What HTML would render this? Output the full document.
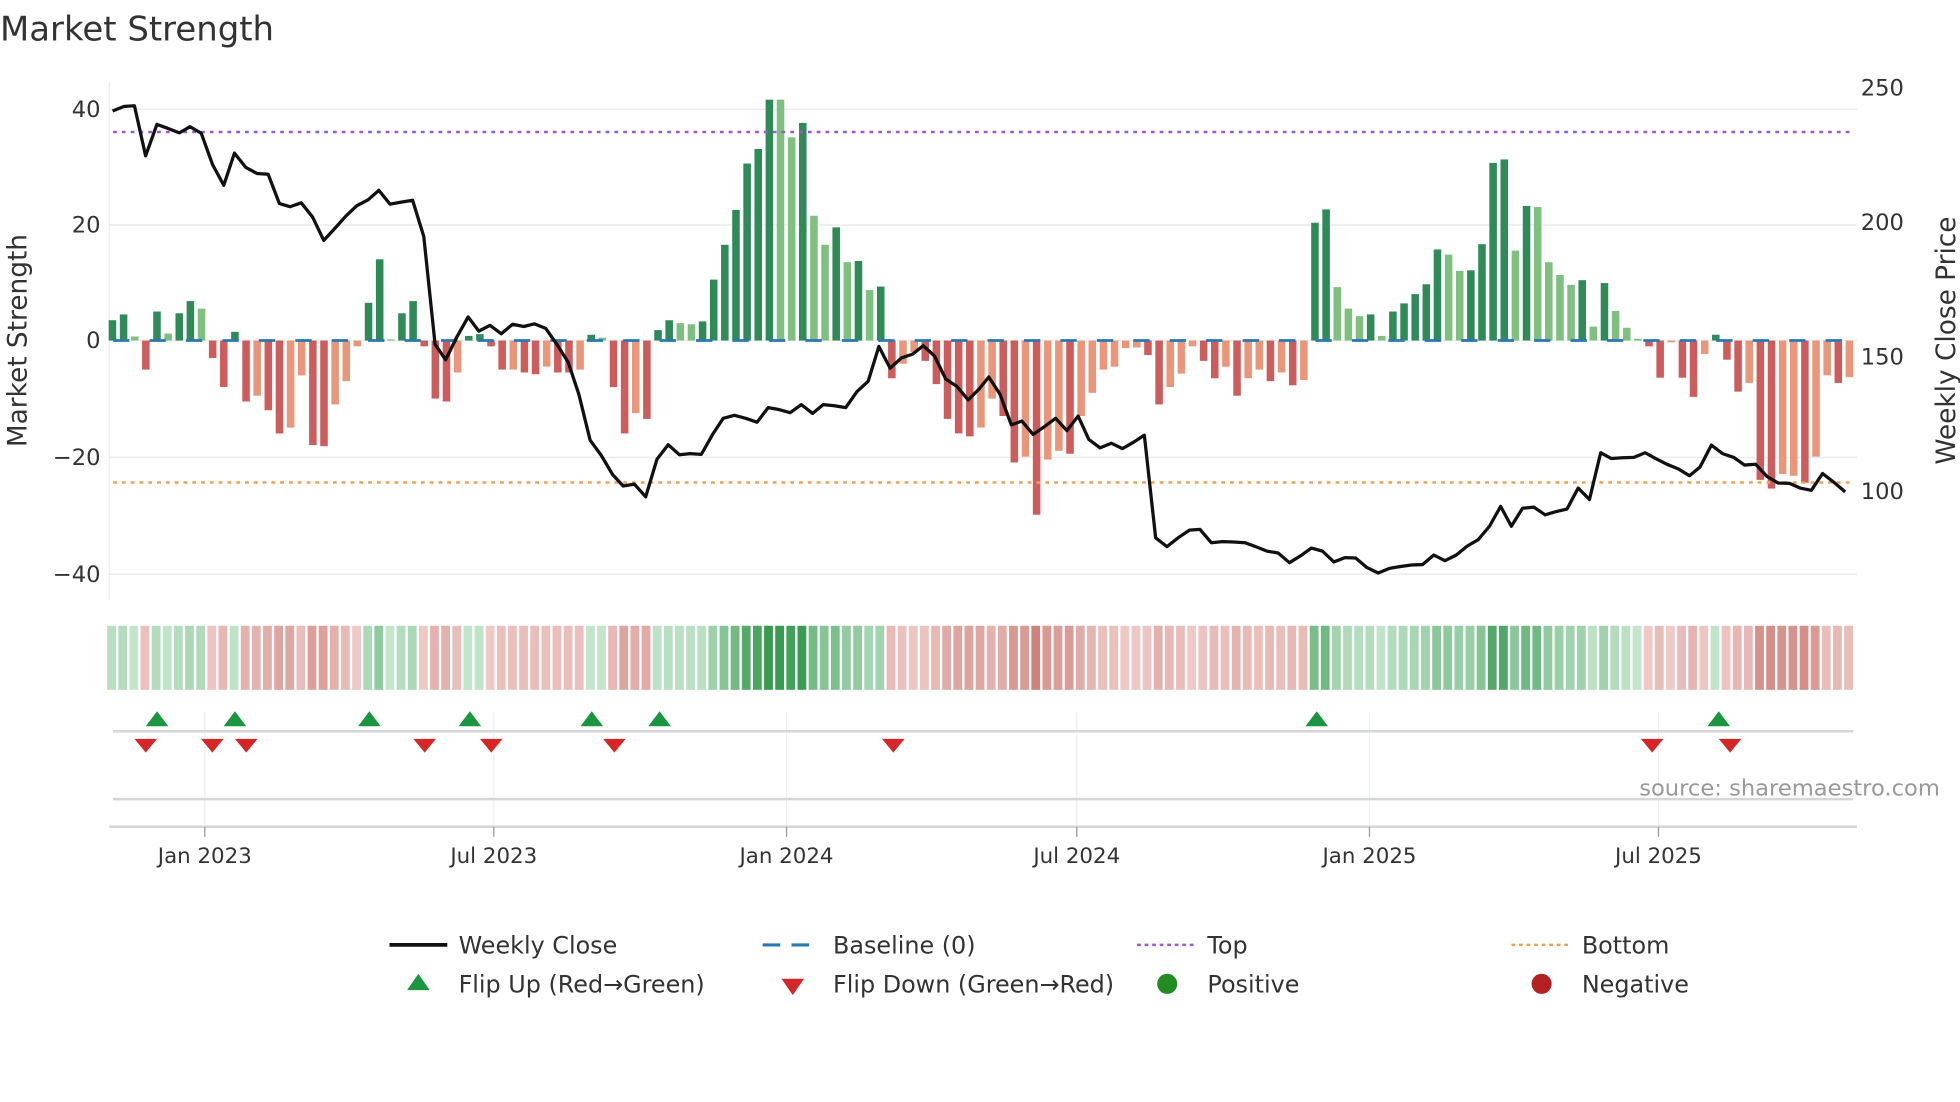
<!DOCTYPE html>
<html><head><meta charset="utf-8"><style>
html,body{margin:0;padding:0;background:#fff;width:1960px;height:1102px;overflow:hidden}
svg{display:block;font-family:"DejaVu Sans","Liberation Sans",sans-serif}
</style></head><body>
<svg id="s" width="1960" height="1102" viewBox="0 0 1560 877" xmlns="http://www.w3.org/2000/svg">
<rect width="1560" height="877" fill="#fff"/>
<text x="0" y="32" font-size="27" fill="#333">Market Strength</text>
<g stroke="#ececec" stroke-width="1.2">
<line x1="87" x2="1478" y1="87" y2="87"/><line x1="87" x2="1478" y1="179" y2="179"/>
<line x1="87" x2="1478" y1="271" y2="271"/><line x1="87" x2="1478" y1="364" y2="364"/>
<line x1="87" x2="1478" y1="457" y2="457"/>
</g>
<line x1="87" x2="87" y1="65" y2="477" stroke="#eee" stroke-width="1"/>
<g font-size="18" fill="#333" text-anchor="end">
<text x="80" y="93">40</text><text x="80" y="185">20</text><text x="80" y="277">0</text>
<text x="80" y="370">−20</text><text x="80" y="463">−40</text>
</g>
<g font-size="18" fill="#333">
<text x="1481" y="76">250</text><text x="1481" y="183">200</text>
<text x="1481" y="290">150</text><text x="1481" y="397">100</text>
</g>
<text transform="translate(21,271) rotate(-90)" font-size="21" fill="#333" text-anchor="middle">Market Strength</text>
<text transform="translate(1556,271) rotate(-90)" font-size="21" fill="#333" text-anchor="middle">Weekly Close Price</text>
<g id="bars"></g>
<line x1="90" x2="1475" y1="271" y2="271" stroke="#2a78b0" stroke-width="2.2" stroke-dasharray="13,16"/>
<line x1="90" x2="1475" y1="105" y2="105" stroke="#9b59d6" stroke-width="2" stroke-dasharray="3,4"/>
<line x1="90" x2="1475" y1="384" y2="384" stroke="#f0a055" stroke-width="2" stroke-dasharray="3,4"/>
<polyline id="price" fill="none" stroke="#111" stroke-width="2.6" stroke-linejoin="round"/>
<g id="strip"></g>
<g stroke="#eef0f2" stroke-width="1">
<line x1="163" x2="163" y1="567" y2="658"/><line x1="393" x2="393" y1="567" y2="658"/>
<line x1="626" x2="626" y1="567" y2="658"/><line x1="857" x2="857" y1="567" y2="658"/>
<line x1="1090" x2="1090" y1="567" y2="658"/><line x1="1320" x2="1320" y1="567" y2="658"/>
</g>
<line x1="90" x2="1475" y1="582" y2="582" stroke="#d4d6d8" stroke-width="2"/>
<line x1="90" x2="1475" y1="636" y2="636" stroke="#d4d6d8" stroke-width="2"/>
<line x1="87" x2="1478" y1="658" y2="658" stroke="#d4d6d8" stroke-width="2"/>
<g id="marks"></g>
<text x="1544" y="633" font-size="18" fill="#999" text-anchor="end">source: sharemaestro.com</text>
<g stroke="#999" stroke-width="1">
<line x1="163" x2="163" y1="658" y2="666"/><line x1="393" x2="393" y1="658" y2="666"/>
<line x1="626" x2="626" y1="658" y2="666"/><line x1="857" x2="857" y1="658" y2="666"/>
<line x1="1090" x2="1090" y1="658" y2="666"/><line x1="1320" x2="1320" y1="658" y2="666"/>
</g>
<g font-size="17" fill="#333" text-anchor="middle">
<text x="163" y="687">Jan 2023</text><text x="393" y="687">Jul 2023</text>
<text x="626" y="687">Jan 2024</text><text x="857" y="687">Jul 2024</text>
<text x="1090" y="687">Jan 2025</text><text x="1320" y="687">Jul 2025</text>
</g>
<g font-size="19" fill="#333">
<line x1="310" x2="356" y1="752" y2="752" stroke="#111" stroke-width="3"/>
<text x="365" y="759">Weekly Close</text>
<line x1="607" x2="652" y1="752" y2="752" stroke="#2a78b0" stroke-width="2.5" stroke-dasharray="14,9"/>
<text x="663" y="759">Baseline (0)</text>
<line x1="905" x2="950" y1="752" y2="752" stroke="#9b59d6" stroke-width="2" stroke-dasharray="3,3"/>
<text x="961" y="759">Top</text>
<line x1="1203" x2="1248" y1="752" y2="752" stroke="#f0a055" stroke-width="2" stroke-dasharray="3,3"/>
<text x="1259" y="759">Bottom</text>
<polygon points="324,788 342,788 333,775" fill="#1a9641"/>
<text x="365" y="790">Flip Up (Red→Green)</text>
<polygon points="622,779 640,779 631,792" fill="#d62728"/>
<text x="663" y="790">Flip Down (Green→Red)</text>
<circle cx="929" cy="783" r="8" fill="#228b22"/>
<text x="961" y="790">Positive</text>
<circle cx="1227" cy="783" r="8" fill="#b22222"/>
<text x="1259" y="790">Negative</text>
</g>
</svg>
<script>
var NS="http://www.w3.org/2000/svg";
var B="3.5D 4.5D 0.7L -5R 5D 1.2L 4.7D 6.8D 5.5L -3R -8R 1.5D -10.5R -9.5S -12R -16R -15S -6S -18R -18.2R -11S -7S -1S 6.5D 14D 0.2L 4.7D 6.8D -1R -10R -10.5R -5.5S 0.8D 1.1D -1R -5R -5S -5.5R -5.8R -4.5S -5.5R -5.5R -5S 1D 0.5L -8R -16R -12.5S -13.5R 1.8D 3.5D 3L 2.8L 3.3D 10.5D 16.5D 22.5D 30.5D 33D 41.5D 41.5L 35L 37.5D 21.5L 16.5L 19.5D 13.5L 13.7D 8.7L 9.3D -6.5R -4S -2S -3.5R -7.5R -13.5R -16R -16.5R -15S -10S -13R -21R -20S -30R -20.5S -19S -19.5R -13S -9S -5S -4.5S -1.3S -1.2S -2.5R -11R -8S -5.7S -1S -3.5R -6.5R -4.5S -9.5R -6.5S -5S -7R -5.5S -7.7R -6.8S 20.3D 22.6D 9.2L 5.5L 4.2L 4.5D 0.8L 5D 6.4D 8D 9.7D 15.7D 14.8L 12L 12.1D 16.6D 30.6D 31.2D 15.5L 23.2D 23L 13.5L 11.3L 9.6L 10.4D 2.4L 9.9D 5.1L 2.2L 0.3L -1R -6.4R -0.3S -6.4R -9.7R -2.3S 1D -3.3R -8.8R -7.3S -24R -25.5R -23S -23.3S -24.5R -20S -6S -7.3R -6.3S".split(" ");
var col={D:"#2e8b57",L:"#7fbf7f",R:"#cd5c5c",S:"#e9967a"};
var gb=document.getElementById("bars"),gs=document.getElementById("strip");
var n=B.length,x0=89.5,dx=(1472-89.5)/(n-1);
for(var i=0;i<n;i++){var t=B[i].slice(-1),v=parseFloat(B[i]);var cx=x0+i*dx;
 var y=271-v*4.62,h=Math.abs(v*4.62);
 var r=document.createElementNS(NS,"rect");r.setAttribute("x",cx-3);r.setAttribute("width",6);
 r.setAttribute("y",v>=0?y:271);r.setAttribute("height",Math.max(h,0.8));r.setAttribute("fill",col[t]);gb.appendChild(r);
 var a=Math.min(Math.abs(v)/40,1),c;
 if(v>=0){var L=[204,234,212],Dk=[55,155,80];var k=Math.min(0.05+a*1.0,1);c="rgb("+L.map(function(q,j){return Math.round(q+(Dk[j]-q)*k)}).join(",")+")";}
 else{var L2=[242,210,208],D2=[205,125,118];var k2=Math.min(0.08+a*1.15,1);c="rgb("+L2.map(function(q,j){return Math.round(q+(D2[j]-q)*k2)}).join(",")+")";}
 var s=document.createElementNS(NS,"rect");s.setAttribute("x",cx-4.2);s.setAttribute("width",7);s.setAttribute("y",498);s.setAttribute("height",51);s.setAttribute("fill",c);gs.appendChild(s);
}
var z1=[[180,290],[198,278],[215,276],[233,407],[251,325],[268,335],[287,347],[304,331],[322,348],[340,430],[358,484],[375,400],[393,437],[411,453],[429,455],[447,532],[464,540],[482,530],[500,567],[518,628],[536,596],[553,565],[571,537],[589,522],[606,497],[624,533],[642,528],[660,523],[678,618],[696,900],[713,940],[731,880],[749,828],[766,865],[784,850],[802,872],[820,847],[838,853],[855,846],[873,858],[891,900],[909,946],[926,1030],[944,1150],[962,1190],[980,1240],[997,1270],[1015,1265],[1033,1298],[1051,1200],[1069,1162],[1087,1188],[1104,1185],[1122,1187],[1140,1135],[1157,1093],[1175,1085],[1193,1093],[1211,1103],[1229,1065],[1246,1070],[1264,1078],[1282,1057],[1300,1080],[1317,1057],[1335,1060],[1353,1065],[1371,1023],[1389,996],[1406,905],[1424,962],[1442,935],[1460,925],[1477,903],[1495,930],[1513,990],[1531,1010],[1549,1045],[1567,1015]];
var z2=[[14,985],[32,1030],[50,1110],[67,1100],[85,1135],[103,1115],[121,1093],[139,1125],[157,1087],[174,1148],[192,1170],[210,1158],[228,1172],[246,1155],[263,1137],[281,1405],[299,1428],[317,1405],[335,1385],[352,1383],[370,1418],[388,1415],[406,1416],[424,1418],[441,1428],[459,1440],[477,1445],[495,1470],[513,1452],[530,1432],[548,1440],[566,1468],[584,1457],[601,1458],[619,1483],[637,1497],[655,1485],[673,1480],[690,1476],[708,1475],[726,1450],[744,1465],[762,1450],[779,1427],[797,1410],[815,1375],[833,1323],[850,1375],[868,1328],[886,1325],[904,1345],[921,1337],[939,1330],[957,1275],[975,1305],[993,1183],[1010,1198],[1028,1196],[1046,1195],[1064,1183],[1081,1198],[1099,1213],[1117,1225],[1135,1243],[1152,1220],[1170,1163],[1188,1185],[1206,1195],[1223,1215],[1241,1213],[1259,1245],[1277,1262],[1295,1263],[1312,1275],[1330,1281],[1348,1237],[1366,1260],[1384,1285]];
var pts=[];z1.forEach(function(p){pts.push((p[0]/2.01).toFixed(1)+","+(p[1]/3.283).toFixed(1))});
z2.forEach(function(p){pts.push((780+p[0]/2.01).toFixed(1)+","+(p[1]/3.283).toFixed(1))});
document.getElementById("price").setAttribute("points",pts.join(" "));
var gm=document.getElementById("marks");
[125,187,294,374,471,525,1048,1368].forEach(function(x){var p=document.createElementNS(NS,"polygon");p.setAttribute("points",(x-9)+",578 "+(x+9)+",578 "+x+",566");p.setAttribute("fill","#1a9641");gm.appendChild(p);});
[116,169,196,338,391,489,711,1315,1377].forEach(function(x){var p=document.createElementNS(NS,"polygon");p.setAttribute("points",(x-9)+",588 "+(x+9)+",588 "+x+",599");p.setAttribute("fill","#d62728");gm.appendChild(p);});
</script>
</body></html>
